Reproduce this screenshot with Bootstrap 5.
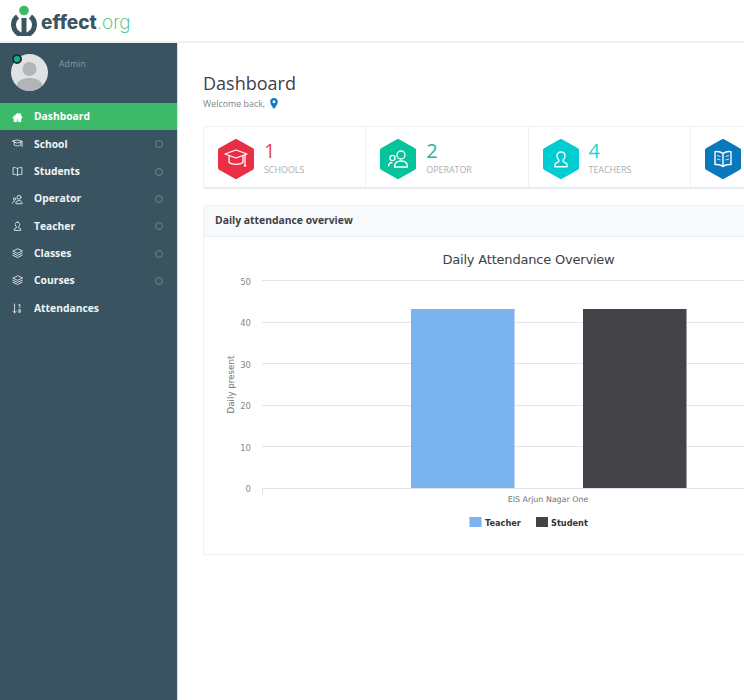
<!doctype html>
<html lang="en"><head><meta charset="utf-8"><title>Dashboard</title>
<link href="https://cdn.jsdelivr.net/npm/bootstrap@5.3.0/dist/css/bootstrap.min.css" rel="stylesheet">
<style>
html,body{height:700px;overflow:hidden;background:#fff}
body{font-family:"Open Sans",sans-serif;color:#3d4248}
.top-bar{height:43px;border-bottom:2px solid #eef0f2;padding-left:11px}
.logo-word{font-family:Inter,sans-serif;font-size:19px;font-weight:800;color:#3b5462;line-height:1;margin-left:4px;margin-top:3px}
.logo-word span{font-weight:200;color:#3cba6a}
.shell{height:657px}
.side-bar{width:178px;flex:none;background:#3a5360;border-right:1px solid #d7dde0}
.profile{height:60px;padding:11px 0 0 11px}
.avatar-wrap{width:37px;height:37px}
.avatar-dot{position:absolute;left:1px;top:0;width:10px;height:10px;border-radius:50%;background:#05b98d;border:2px solid #1f2d36}
.admin-name{font-size:8.5px;color:#8b9ba5;margin:4px 0 0 11px;letter-spacing:.2px}
.menu-row{height:27.3px;padding:1px 14px 0 12px;font-size:10.3px;font-weight:700;color:#f1f4f5;text-decoration:none}
.menu-row:hover{color:#fff}
.menu-row.on{background:#3cba6a;color:#fff}
.menu-ico{width:11px;height:11px;margin-right:11px;flex:none;fill:none;stroke:#dfe5e8;stroke-width:1;stroke-linecap:round;stroke-linejoin:round}
.on .menu-ico{fill:#fff;stroke:#fff}
.ico-digit{font:700 5.5px "Open Sans",sans-serif;fill:#dfe5e8;stroke:none}
.ring{width:8px;height:8px;border:1px solid #6f8490;border-radius:50%;margin-left:auto}
.main-pane{padding:28px 0 0 25px;min-width:0;flex:1;overflow:hidden}
.page-title{font-size:18px;font-weight:400;color:#3d4248;margin:0;line-height:24px}
.welcome{font-size:8.9px;color:#7d8790;margin-top:2px;line-height:14px;height:14px}
.welcome svg{width:8px;height:11px;margin-left:3px;vertical-align:-2px}
.stat-box{width:650px;height:63px;margin-top:15px;border:1px solid #eef1f4;border-bottom:2px solid #e7ebef;border-radius:2px}
.stat-cell{width:162.25px;flex:none;padding-left:14px;padding-top:5px;border-right:1px solid #eef1f4}
.stat-cell:last-child{border-right:0}
.hex{width:36px;height:40px;flex:none;margin-right:10px;margin-top:-1px}
.stat-text{margin-bottom:2px}
.stat-num{font-size:20px;line-height:22px;font-weight:400}
.stat-lab{font-size:8.9px;line-height:14px;color:#a9afb5;margin-top:1px}
.chart-box{width:650px;height:350px;margin-top:16px;border:1px solid #eef1f4;border-radius:2px}
.chart-head{height:31px;background:#f8f9fa;border-bottom:1px solid #eef1f4;padding-left:11px;font-size:10.35px;font-weight:700;color:#3d4248;line-height:28px}
.chart-svg{display:block;width:648px;height:317px;font-family:"DejaVu Sans",sans-serif}
</style></head>
<body>
<svg width="0" height="0" class="position-absolute"><defs>
<symbol id="i-home" viewBox="0 0 12 12"><path d="M6 1.500 .8 6.200h1.500V10.500h2.800V7.500h1.800v3h2.800V6.200h1.500L9.500 4.100V2H8.200v.9Z"/></symbol>
<symbol id="i-cap" viewBox="0 0 12 12"><path d="M.8 2.200 6 1l5.200 1.600L6 4.400Z"/><path d="M2.500 3.200v3.400c1.800 1.300 5.200 1.300 7 0V3.500M11 2.800v5.700"/></symbol>
<symbol id="i-book" viewBox="0 0 12 12"><path d="M6 2.800C4.800 1.700 2.800 1.500 1.200 1.800v7.500c1.700-.3 3.600 0 4.800 1 1.200-1 3.100-1.300 4.800-1V1.800C9.200 1.500 7.200 1.700 6 2.800ZM6 2.800v7.400"/></symbol>
<symbol id="i-users" viewBox="0 0 12 12"><circle cx="7.600" cy="3.500" r="2.100"/><path d="M4.200 10.200c0-1.900 1.100-3 3.400-3s3.400 1.100 3.400 3Z"/><circle cx="2.800" cy="5.300" r="1.300"/><path d="M.5 10c0-1.500.7-2.200 2.400-2.200"/></symbol>
<symbol id="i-user" viewBox="0 0 12 12"><path d="M6 1.200c1.500 0 2.400 1 2.400 2.500 0 1.300-.7 2.300-1.200 2.800v1l2.200 1v1.800H2.600V8.500l2.200-1v-1C4.300 6 3.600 5 3.600 3.700 3.600 2.200 4.500 1.200 6 1.200Z"/></symbol>
<symbol id="i-layers" viewBox="0 0 12 12"><path d="M6 1 .9 3.400 6 5.800l5.100-2.400Z"/><path d="M.9 5.700 6 8.100l5.100-2.400M.9 7.900 6 10.400l5.100-2.500"/></symbol>
<symbol id="i-sort" viewBox="0 0 12 12"><path d="M2.800 1v9.800M.9 8.800l1.900 2 1.900-2"/><text class="ico-digit" x="6.500" y="5.200">1</text><text class="ico-digit" x="6.500" y="11">9</text></symbol>
</defs></svg>

<header class="top-bar d-flex align-items-center">
<svg width="26" height="31" viewBox="0 0 26 31" class="flex-none" aria-hidden="true"><path d="M6.500 11.500A10.500 10.500 0 1 0 19.500 11.500" fill="none" stroke="#3b5462" stroke-width="5"/><rect x="10.500" y="13" width="5" height="15" fill="#3b5462"/><circle cx="13" cy="5.500" r="4.800" fill="#3cba6a"/></svg>
<div class="logo-word">effect<span>.org</span></div>
</header>

<div class="shell d-flex">
<nav class="side-bar">
 <div class="profile d-flex">
  <div class="avatar-wrap position-relative">
   <svg width="37" height="37" viewBox="0 0 37 37" aria-hidden="true"><circle cx="18.500" cy="18.500" r="18.500" fill="#e0e1e2"/><circle cx="18.500" cy="15" r="7" fill="#b2b5b8"/><path d="M5.500 31.500C7 26 12 24 18.500 24S30 26 31.500 31.500C28 35 23.500 37 18.500 37S9 35 5.500 31.500Z" fill="#b2b5b8"/></svg>
   <span class="avatar-dot"></span>
  </div>
  <div class="admin-name">Admin</div>
 </div>
 <a class="menu-row on d-flex align-items-center" href="#"><svg class="menu-ico"><use href="#i-home"/></svg>Dashboard</a>
 <a class="menu-row d-flex align-items-center" href="#"><svg class="menu-ico"><use href="#i-cap"/></svg>School<span class="ring"></span></a>
 <a class="menu-row d-flex align-items-center" href="#"><svg class="menu-ico"><use href="#i-book"/></svg>Students<span class="ring"></span></a>
 <a class="menu-row d-flex align-items-center" href="#"><svg class="menu-ico"><use href="#i-users"/></svg>Operator<span class="ring"></span></a>
 <a class="menu-row d-flex align-items-center" href="#"><svg class="menu-ico"><use href="#i-user"/></svg>Teacher<span class="ring"></span></a>
 <a class="menu-row d-flex align-items-center" href="#"><svg class="menu-ico"><use href="#i-layers"/></svg>Classes<span class="ring"></span></a>
 <a class="menu-row d-flex align-items-center" href="#"><svg class="menu-ico"><use href="#i-layers"/></svg>Courses<span class="ring"></span></a>
 <a class="menu-row d-flex align-items-center" href="#"><svg class="menu-ico"><use href="#i-sort"/></svg>Attendances</a>
</nav>

<main class="main-pane">
 <h1 class="page-title">Dashboard</h1>
 <div class="welcome">Welcome back, <svg viewBox="0 0 8 11" aria-hidden="true"><path fill-rule="evenodd" d="M4 0C1.800 0 .2 1.600.2 3.700.2 6.300 4 11 4 11s3.800-4.700 3.800-7.300C7.800 1.600 6.200 0 4 0Zm0 2.300a1.500 1.500 0 1 1 0 3 1.500 1.500 0 0 1 0-3Z" fill="#0b7bc0"/></svg></div>

 <div class="stat-box d-flex">
  <div class="stat-cell d-flex align-items-center">
   <svg class="hex" viewBox="0 0 36 40" aria-hidden="true"><path d="M18 2 34 11V29L18 38 2 29V11Z" fill="#ea2e45" stroke="#ea2e45" stroke-width="4" stroke-linejoin="round"/><g fill="none" stroke="#fff" stroke-width="1.300" stroke-linejoin="round" stroke-linecap="round"><path d="M7 15 18 11l11 4-11 4Z"/><path d="M11 17.500v6c3 2.500 11 2.500 14 0v-6M27 16v9"/></g><circle cx="27" cy="26.500" r="1.200" fill="#fff"/></svg>
   <div class="stat-text"><div class="stat-num" style="color:#ea4456">1</div><div class="stat-lab">SCHOOLS</div></div>
  </div>
  <div class="stat-cell d-flex align-items-center">
   <svg class="hex" viewBox="0 0 36 40" aria-hidden="true"><path d="M18 2 34 11V29L18 38 2 29V11Z" fill="#05c39a" stroke="#05c39a" stroke-width="4" stroke-linejoin="round"/><g fill="none" stroke="#fff" stroke-width="1.300" stroke-linejoin="round"><circle cx="21" cy="16" r="4"/><path d="M14.500 28c0-4 1.500-6 6.500-6s6.500 2 6.500 6Z"/><circle cx="12.500" cy="19" r="2.600"/><path d="M8.500 27.500c0-2.500 1.200-4 4-4"/></g></svg>
   <div class="stat-text"><div class="stat-num" style="color:#26b593">2</div><div class="stat-lab">OPERATOR</div></div>
  </div>
  <div class="stat-cell d-flex align-items-center">
   <svg class="hex" viewBox="0 0 36 40" aria-hidden="true"><path d="M18 2 34 11V29L18 38 2 29V11Z" fill="#00ccd2" stroke="#00ccd2" stroke-width="4" stroke-linejoin="round"/><path d="M18 13c2.700 0 4 1.800 4 4 0 1.800-.9 3.200-1.800 4v1.500l3.800 2.300v3H12v-3l3.800-2.300V21c-.9-.8-1.800-2.200-1.800-4 0-2.200 1.300-4 4-4Z" fill="none" stroke="#fff" stroke-width="1.400" stroke-linejoin="round"/></svg>
   <div class="stat-text"><div class="stat-num" style="color:#22d0d5">4</div><div class="stat-lab">TEACHERS</div></div>
  </div>
  <div class="stat-cell d-flex align-items-center">
   <svg class="hex" viewBox="0 0 36 40" aria-hidden="true"><path d="M18 2 34 11V29L18 38 2 29V11Z" fill="#0a78bd" stroke="#0a78bd" stroke-width="4" stroke-linejoin="round"/><path d="M18 14.500c-2.300-1.800-5.200-2.300-8-1.900v13c2.800-.4 5.700.1 8 1.900 2.300-1.800 5.200-2.300 8-1.900v-13c-2.800-.4-5.700.1-8 1.900ZM18 14.500v13" fill="none" stroke="#fff" stroke-width="1.400" stroke-linejoin="round"/><path d="M12 16.500l3.500 1M12 20l3.500 1M20.500 17.500l3.500-1M20.500 21l3.500-1" stroke="#fff" stroke-width=".8"/></svg>
  </div>
 </div>

 <section class="chart-box">
  <div class="chart-head">Daily attendance overview</div>
  <svg class="chart-svg" viewBox="204 237 648 317" role="img" aria-label="Daily Attendance Overview chart">
   <text x="528.500" y="264" text-anchor="middle" font-size="13" letter-spacing="-.2" fill="#3d4248">Daily Attendance Overview</text>
   <g stroke="#e3e6e8" stroke-width="1"><path d="M262 280.500H852M262 322.500H852M262 363.500H852M262 405.500H852M262 446.500H852"/></g>
   <path d="M262.500 494V488.500H852" fill="none" stroke="#dde4ee" stroke-width="1"/>
   <g font-size="8.500" fill="#85898d" text-anchor="end"><text x="251" y="285">50</text><text x="251" y="326">40</text><text x="251" y="368">30</text><text x="251" y="409">20</text><text x="251" y="451">10</text><text x="251" y="492">0</text></g>
   <text transform="translate(233.500 384.500) rotate(-90)" text-anchor="middle" font-size="8.700" fill="#6f7377">Daily present</text>
   <rect x="411" y="309" width="103.500" height="179" fill="#7ab3ed"/>
   <rect x="583" y="309" width="103.500" height="179" fill="#434348"/>
   <text x="548" y="502" text-anchor="middle" font-size="7.900" fill="#707478">EIS Arjun Nagar One</text>
   <rect x="469.500" y="517" width="12" height="10" fill="#7ab3ed"/>
   <text x="485" y="525.500" font-size="8.200" font-weight="700" fill="#333">Teacher</text>
   <rect x="536" y="517" width="12" height="10" fill="#434348"/>
   <text x="551" y="525.500" font-size="8.200" font-weight="700" fill="#333">Student</text>
  </svg>
 </section>
</main>
</div>
<script src="https://cdn.jsdelivr.net/npm/bootstrap@5.3.0/dist/js/bootstrap.bundle.min.js"></script>
</body></html>
